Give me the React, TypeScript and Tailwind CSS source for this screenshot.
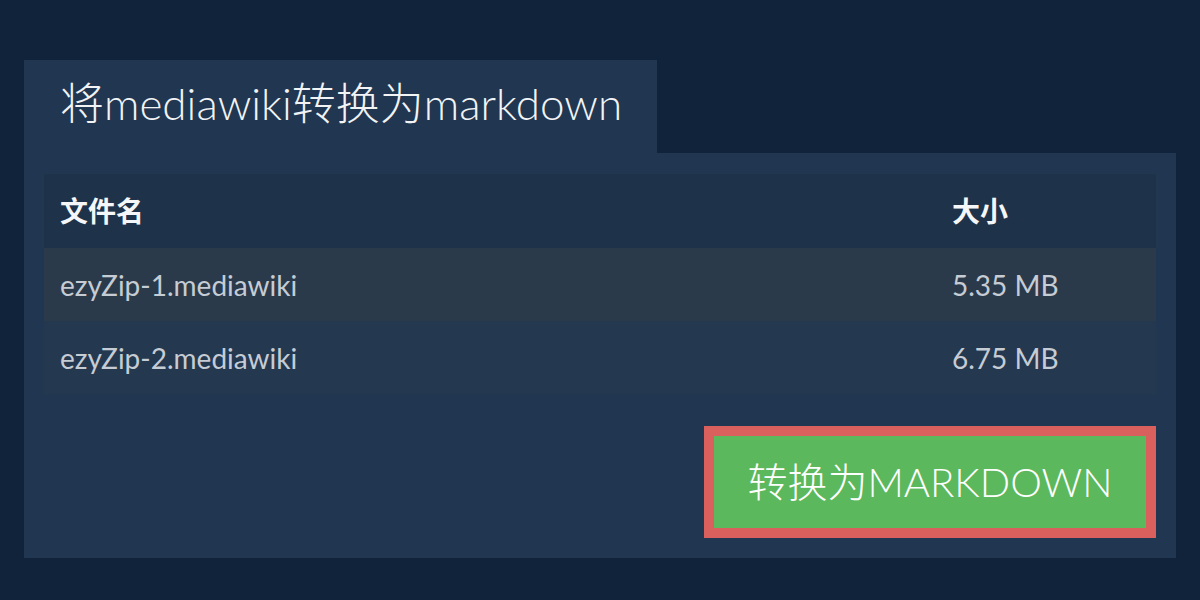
const files = [
  { name: "ezyZip-1.mediawiki", size: "5.35 MB" },
  { name: "ezyZip-2.mediawiki", size: "6.75 MB" },
];

export default function App() {
  return (
    <div
      className="min-h-[600px] w-full bg-[#10233a] px-6 pt-[60px] pb-[43px]"
      style={{ fontFamily: '"Lato", "Noto Sans CJK SC", sans-serif' }}
    >
      <div className="flex h-[93px] w-[633px] items-center bg-[#213650] pb-2 pl-9">
        <h1 className="text-[44px] font-light leading-none text-[#f1f3f5]">
          将mediawiki转换为markdown
        </h1>
      </div>

      <div className="flex flex-col bg-[#213650] px-5 pt-[21px] pb-5">
        <div className="flex flex-col">
          <div className="grid h-[74px] grid-cols-[892px_1fr] items-center bg-[#1e324a] text-[28px] font-bold text-[#f4f6f8]">
            <div className="px-4">文件名</div>
            <div className="px-4">大小</div>
          </div>
          {files.map((f, i) => (
            <div
              key={f.name}
              className={`grid h-[73px] grid-cols-[892px_1fr] items-center text-[28px] text-[#c6ccd4] ${
                i === 0 ? "bg-[#2b3a4b]" : "bg-[#243850]"
              }`}
            >
              <div className="px-4">{f.name}</div>
              <div className="px-4">{f.size}</div>
            </div>
          ))}
        </div>

        <div className="mt-8 flex justify-end">
          <button className="flex h-[112px] w-[452px] items-center justify-center border-[10px] border-[#d9605c] bg-[#5cb85c] text-[40px] font-light leading-none text-white">
            转换为MARKDOWN
          </button>
        </div>
      </div>
    </div>
  );
}
